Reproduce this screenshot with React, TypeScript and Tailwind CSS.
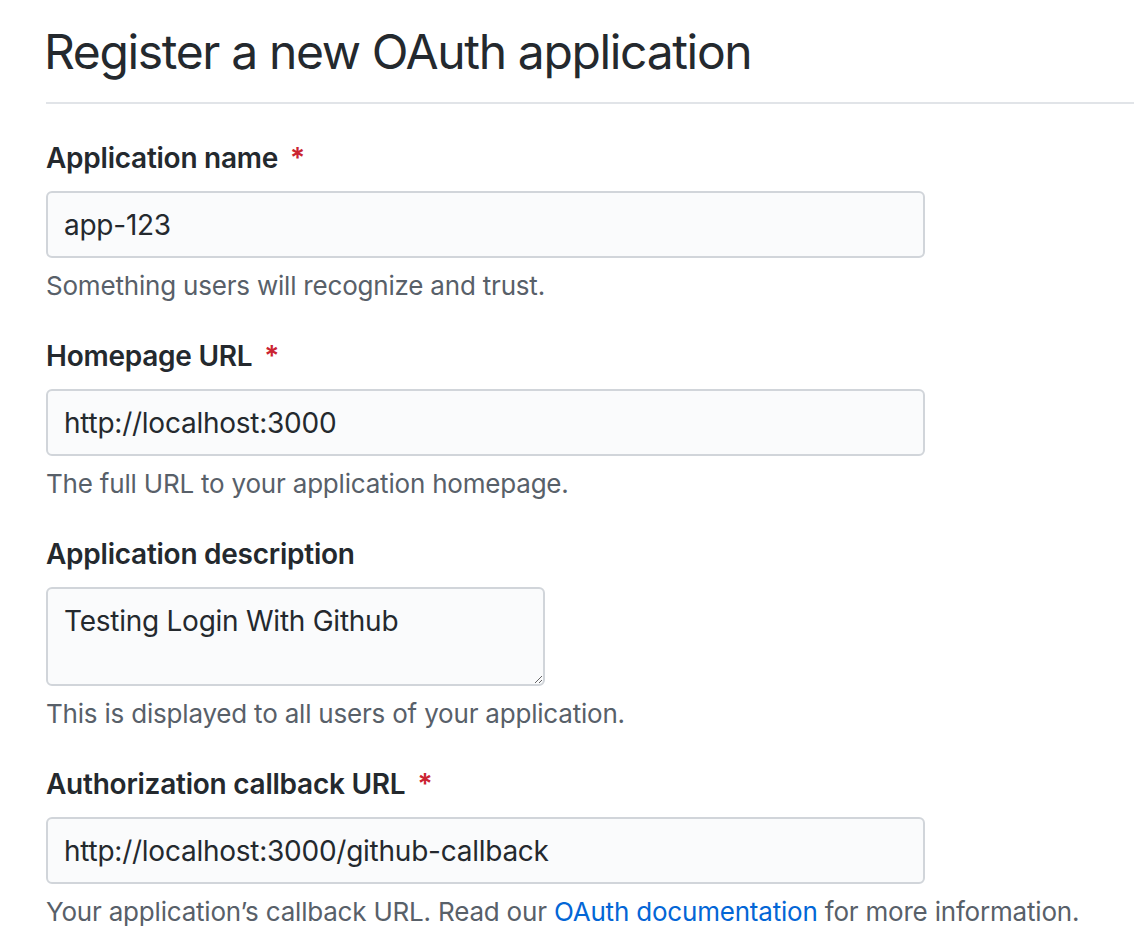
const FONT = "font-['Inter','Liberation_Sans',sans-serif]";

interface FieldProps {
  label: string;
  required?: boolean;
  value: string;
  hint: React.ReactNode;
  multiline?: boolean;
}

function Field({ label, required, value, hint, multiline }: FieldProps) {
  return (
    <div className="flex flex-col">
      <label className="flex h-[40px] items-center text-[28px] font-semibold tracking-[-0.25px] text-[#24292e]">
        {label}
        {required && (
          <span className="ml-[12px] text-[#cb2431]">*</span>
        )}
      </label>
      {multiline ? (
        <textarea
          defaultValue={value}
          className={`mt-[13px] h-[99px] w-[499px] rounded-[6px] border-2 border-[#d1d5da] bg-[#fafbfc] px-[16px] py-[14px] text-[28px] leading-[36px] tracking-[-0.25px] text-[#24292e] outline-none ${FONT}`}
        />
      ) : (
        <input
          type="text"
          defaultValue={value}
          className={`mt-[13px] h-[67px] w-[879px] rounded-[6px] border-2 border-[#d1d5da] bg-[#fafbfc] px-[16px] text-[28px] tracking-[-0.25px] text-[#24292e] outline-none ${FONT}`}
        />
      )}
      <p className="mt-[10px] h-[36px] text-[26px] leading-[36px] tracking-[-0.2px] text-[#586069]">
        {hint}
      </p>
    </div>
  );
}

export default function App() {
  return (
    <div className={`min-h-screen bg-white pl-[46px] ${FONT}`}>
      {/* Subhead */}
      <div className="border-b-2 border-[#e1e4e8] pt-[20px] pb-[18px]">
        <h1 className="-ml-[2px] text-[48px] leading-[64px] font-normal tracking-[-1.35px] text-[#24292e]">
          Register a new OAuth application
        </h1>
      </div>

      <div className="flex flex-col gap-[32px] pt-[34px]">
        <Field
          label="Application name"
          required
          value="app-123"
          hint="Something users will recognize and trust."
        />
        <Field
          label="Homepage URL"
          required
          value="http://localhost:3000"
          hint="The full URL to your application homepage."
        />
        <Field
          label="Application description"
          value="Testing Login With Github"
          hint="This is displayed to all users of your application."
          multiline
        />
        <Field
          label="Authorization callback URL"
          required
          value="http://localhost:3000/github-callback"
          hint={
            <>
              Your application’s callback URL. Read our{" "}
              <a href="#" className="text-[#0366d6]">
                OAuth documentation
              </a>{" "}
              for more information.
            </>
          }
        />
      </div>
    </div>
  );
}
